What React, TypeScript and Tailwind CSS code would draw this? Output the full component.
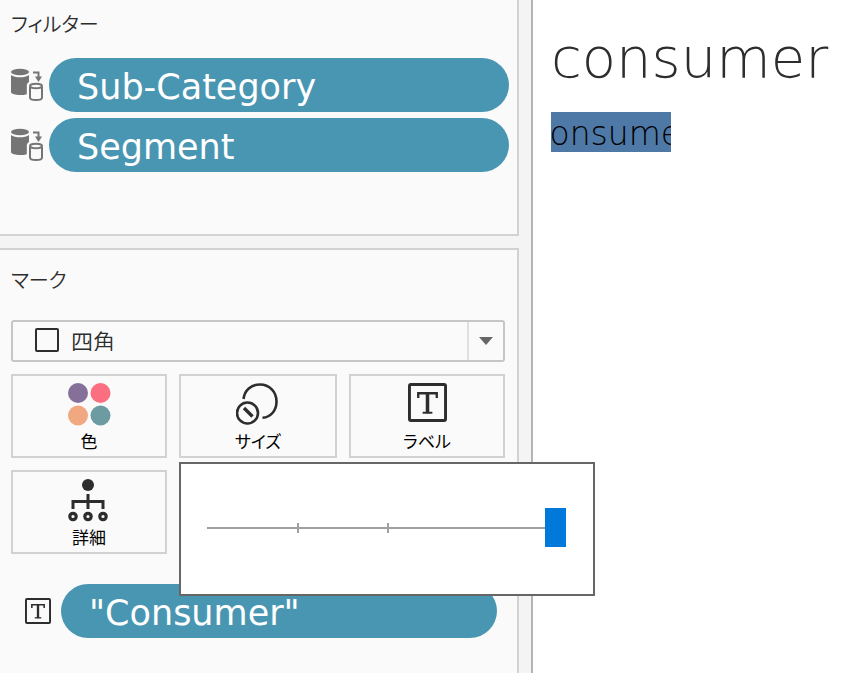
import React, { useState } from "react";

const DataSourceIcon = () => (
  <svg width="34" height="34" viewBox="0 0 34 34" fill="none" className="shrink-0" aria-hidden="true">
    <ellipse cx="9" cy="4" rx="9" ry="3.200" fill="#757575" />
    <path d="M0 7c2 1.600 5.500 2.300 9 2.300s7-.7 9-2.300V14c-1.500.8-2.200 2-2.200 3.500v8.700c-2 .6-4.300.9-6.800.9-4.500 0-9-1-9-3z" fill="#757575" />
    <path d="M22 4.500h5.500v5" stroke="#757575" strokeWidth="2" />
    <path d="M24 8.500h7L27.500 14z" fill="#757575" />
    <path d="M19 19v10.500c0 1.600 2.700 2.500 6 2.500s6-.9 6-2.500V19" stroke="#757575" strokeWidth="2" />
    <ellipse cx="25" cy="18" rx="6" ry="2.300" stroke="#757575" strokeWidth="2" />
  </svg>
);

const ColorIcon = () => (
  <svg width="44" height="44" viewBox="0 0 44 44" aria-hidden="true">
    <circle cx="11" cy="11" r="10" fill="#85709a" />
    <circle cx="33.500" cy="11" r="10" fill="#fb6f80" />
    <circle cx="11" cy="33.500" r="10" fill="#f1a77f" />
    <circle cx="33.500" cy="33.500" r="10" fill="#6d9ba2" />
  </svg>
);

const SizeIcon = () => (
  <svg width="44" height="44" viewBox="0 0 44 44" fill="none" stroke="#2d2d2d" strokeWidth="2.600" aria-hidden="true">
    <path d="M7.500 17C8.500 8.500 15 2.500 24 2.500c9.500 0 16.500 7.500 16.500 17C40.500 28.500 35 35 26.500 35.800" />
    <circle cx="11.500" cy="31" r="10.500" />
    <path d="M8 26l8.500 8.500" strokeWidth="3.400" />
  </svg>
);

const DetailIcon = () => (
  <svg width="44" height="44" viewBox="0 0 44 44" fill="none" stroke="#2d2d2d" aria-hidden="true">
    <circle cx="21" cy="7" r="6" fill="#2d2d2d" stroke="none" />
    <path d="M21 16v15M6 31v-7.500h30V31" strokeWidth="3" />
    <circle cx="6" cy="38.500" r="3.200" strokeWidth="3.200" />
    <circle cx="21" cy="38.500" r="3.200" strokeWidth="3.200" />
    <circle cx="36" cy="38.500" r="3.200" strokeWidth="3.200" />
  </svg>
);

const TextIcon = ({ className }: { className: string }) => (
  <svg viewBox="0 0 40 40" fill="none" stroke="#2d2d2d" className={className} aria-hidden="true">
    <rect x="1.500" y="1.500" width="37" height="37" rx="1.500" strokeWidth="3" />
    <path d="M10.500 15.500v-5h19v5" strokeWidth="2.400" />
    <path d="M20 10v21" strokeWidth="3.600" />
    <path d="M15 30.500h10" strokeWidth="2" />
  </svg>
);

const Pill = ({ children }: { children: React.ReactNode }) => (
  <button className="flex h-[54px] min-w-0 flex-1 items-center rounded-full bg-[#4996b2] pl-7 pt-1 text-left font-['DejaVu_Sans',sans-serif] text-[35px] leading-none text-white">
    {children}
  </button>
);

const MarkButton = ({ icon, label }: { icon: React.ReactNode; label: string }) => (
  <button className="flex h-[84px] w-full flex-col items-center border-2 border-[#d2d2d2] bg-[#fafafa] pt-[5px] text-[17px] leading-7 text-black">
    <span className="flex h-[46px] items-center">{icon}</span>
    {label}
  </button>
);

export default function App() {
  const [size, setSize] = useState(100);

  return (
    <div className="flex min-h-screen overflow-hidden bg-white font-['Noto_Sans_CJK_JP',sans-serif] [font-feature-settings:'palt']">
      <aside className="flex w-[533px] shrink-0 flex-col gap-3 border-r-2 border-[#b4b4b4] bg-[#f4f4f4] pr-3">
        {/* Filters shelf */}
        <section className="border-b-2 border-r-2 border-[#d2d2d2] bg-[#fafafa] pb-[62px] pl-[11px] pr-2">
          <h2 className="flex h-[58px] items-center pb-[10px] text-xl font-[350] text-[#2d2d2d]">フィルター</h2>
          <div className="flex flex-col gap-1.5">
            {["Sub-Category", "Segment"].map((f) => (
              <div key={f} className="flex items-center gap-1">
                <DataSourceIcon />
                <Pill>{f}</Pill>
              </div>
            ))}
          </div>
        </section>

        {/* Marks card */}
        <section className="flex-1 border-r-2 border-t-2 border-[#d2d2d2] bg-[#fafafa] pl-[11px] pr-3">
          <h2 className="flex h-[70px] items-center pb-[10px] text-xl font-[350] text-[#2d2d2d]">マーク</h2>

          <div className="relative">
            <select
              aria-label="マーク"
              className="block h-[42px] w-full appearance-none rounded-[3px] border-2 border-[#c6c6c6] bg-[#fafafa] pb-[2px] pl-[58px] text-[22px] font-[350] leading-none text-[#2d2d2d]"
            >
              <option>四角</option>
            </select>
            <span className="pointer-events-none absolute left-6 top-2 size-6 rounded-[2px] border-2 border-[#2d2d2d]" />
            <span className="pointer-events-none absolute inset-y-[2px] right-[2px] flex w-[36px] items-center justify-center border-l-2 border-[#e0e0e0]">
              <svg width="14" height="8" viewBox="0 0 14 8" aria-hidden="true">
                <path d="M0 0h14L7 8z" fill="#666" />
              </svg>
            </span>
          </div>

          <div className="mt-3 grid grid-cols-[156fr_158fr_156fr] gap-3">
            <MarkButton icon={<ColorIcon />} label="色" />
            <div className="relative">
              <MarkButton icon={<SizeIcon />} label="サイズ" />
              <div className="absolute left-0 top-full z-10 mt-1 h-[134px] w-[416px] border-2 border-[#666] bg-white pl-[26px] pr-[27px] pt-11">
                <div className="relative">
                  <span className="absolute inset-x-0 top-[19px] h-[2px] bg-[#a0a0a0]" />
                  <span className="absolute left-1/4 top-[15px] h-[10px] w-[2px] bg-[#a0a0a0]" />
                  <span className="absolute left-1/2 top-[15px] h-[10px] w-[2px] bg-[#a0a0a0]" />
                  <input
                    type="range"
                    aria-label="サイズ"
                    value={size}
                    onChange={(e) => setSize(Number(e.target.value))}
                    className="relative block h-[39px] w-full appearance-none bg-transparent [&::-webkit-slider-thumb]:h-[39px] [&::-webkit-slider-thumb]:w-[21px] [&::-webkit-slider-thumb]:appearance-none [&::-webkit-slider-thumb]:bg-[#0079db]"
                  />
                </div>
              </div>
            </div>
            <MarkButton icon={<TextIcon className="mb-1 size-[39px]" />} label="ラベル" />
            <MarkButton icon={<DetailIcon />} label="詳細" />
          </div>

          <div className="flex items-center gap-[10px] pl-[14px] pr-2 pt-[30px]">
            <TextIcon className="size-[26px] shrink-0" />
            <Pill>"Consumer"</Pill>
          </div>
        </section>
      </aside>

      {/* Worksheet view */}
      <main className="min-w-0 flex-1 pl-[18px] pt-[22px] font-['DejaVu_Sans',sans-serif] font-extralight">
        <h1 className="text-[56px] leading-[72px] text-[#2d2d2d]">consumer</h1>
        {/* label is wider than its mark and gets clipped on both sides */}
        <div className="mt-[18px] flex h-10 w-[120px] items-center justify-center overflow-hidden bg-[#4e79a7] pl-1 pt-1 text-[33px] text-black">
          <span>consumer</span>
        </div>
      </main>
    </div>
  );
}
